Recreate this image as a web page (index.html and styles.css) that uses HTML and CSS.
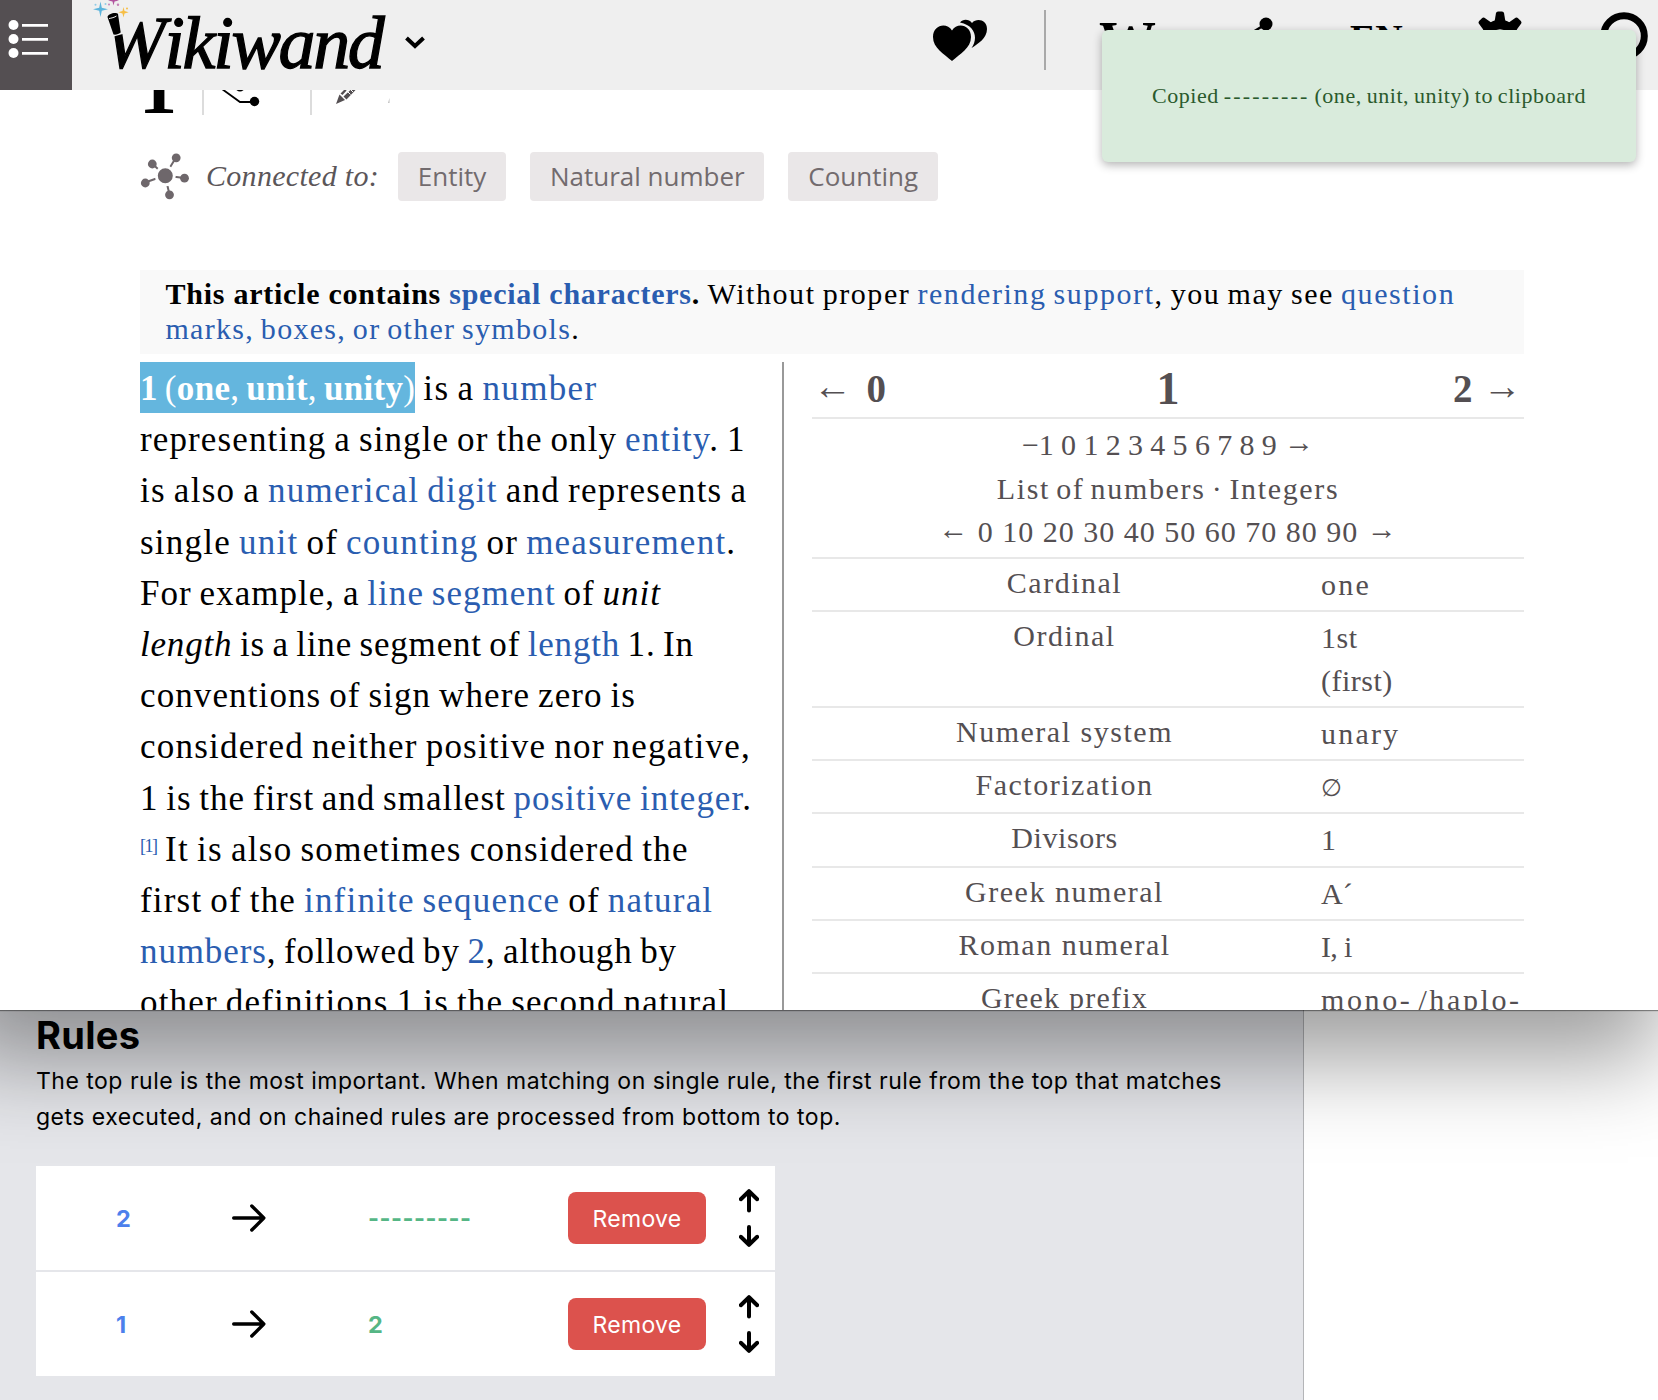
FILE: index.html
```html
<!DOCTYPE html>
<html lang="en">
<head>
<meta charset="utf-8">
<title>1 - Wikiwand</title>
<link rel="stylesheet" href="styles.css">
</head>
<body>
<main class="window">
  <header class="topbar">
    <button class="menu" aria-label="Contents">
      <svg width="72" height="90" viewBox="0 0 72 90"><g fill="#fff"><circle cx="13.5" cy="25" r="5"/><circle cx="13.5" cy="39" r="5"/><circle cx="13.5" cy="53" r="5"/><path d="M22 24h26v2.8H22zM22 38h26v2.8H22zM22 52h26v2.8H22z"/></g></svg>
    </button>
    <div class="logo">
      <span class="logo-text"><span class="cap">W</span>ikiwand</span>
      <svg class="wand" width="50" height="50" viewBox="90 0 50 50">
        <path d="M104 10h25v14h-5.500l1 9.500-11 3-9.500-4z" fill="#efefef"/>
        <path d="M107.500 17c0-3.500 9-5.500 10.500-3l2.700 18.500c-1.500 1.500-5 2.500-7.200 2z"/>
        <path d="M109 18.500c2-.2 6-1.300 7.500-2.500" stroke="#efefef" fill="none"/>
        <path d="M100.500 1.500l1.300 6.200 6.200 1.500-6.200 1.500-1.300 6.300-1.300-6.300-6.200-1.500 6.200-1.500z" fill="#5cb4dc"/>
        <path d="M113.500-5l1 4.500 4.500 1-4.500 1-1 4-1-4-4.500-1 4.500-1z" fill="#b2569f"/>
        <path d="M123.500 7l1 4 4.200 1.200-4.200 1.200-1 4-1-4-4.200-1.200 4.200-1.200z" fill="#f6be45"/>
        <g fill="#8fcbe6"><circle cx="95.500" cy="4.800" r="1"/><circle cx="105.500" cy="4" r="1"/></g>
        <g fill="#c583b8"><circle cx="109" cy="4.500" r="1"/><circle cx="118" cy="4.800" r="1.200"/></g>
        <circle cx="127" cy="8.500" r="1" fill="#f6be45"/>
      </svg>
    </div>
    <svg class="chevron" width="20" height="14" viewBox="0 0 20 14"><path d="M1.500 2l8.500 8 8.500-8" fill="none" stroke="#000" stroke-width="4"/></svg>
    <nav class="tools">
      <svg width="56" height="44" viewBox="932 18 56 44"><path d="M971.500 48c6-8 5.500-22-11.500-25.500 3-4 9-3.500 12 .5 5-5.500 15-3 15 6 0 9-9 15-15.500 19z"/><path d="M952 61c-8-7-19-13-19-24 0-12.500 14-15 19-6.500 5-8.500 19-6 19 6.500 0 11-11 17-19 24z" stroke="#efefef" stroke-width="3.500" paint-order="stroke"/></svg>
      <i class="sep"></i>
      <b class="w">W</b>
      <svg class="share" width="40" height="50" viewBox="1234 15 40 50"><path d="M1266 24l-26 16 26 16" fill="none" stroke="#000" stroke-width="2.500"/><circle cx="1266" cy="24" r="6.500"/><circle cx="1240" cy="40" r="6"/><circle cx="1266" cy="56" r="6.500"/></svg>
      <b class="en">EN</b>
      <svg class="gear" width="56" height="56" viewBox="-28 -28 56 56"><defs><path id="tooth" d="M-5.500-17l1.500-9q.4-1.500 2-1.500h4q1.600 0 2 1.500l1.500 9z"/></defs><circle r="14.500" fill="none" stroke="#000" stroke-width="9.500"/><use href="#tooth"/><use href="#tooth" transform="rotate(45)"/><use href="#tooth" transform="rotate(90)"/><use href="#tooth" transform="rotate(135)"/><use href="#tooth" transform="rotate(180)"/><use href="#tooth" transform="rotate(225)"/><use href="#tooth" transform="rotate(270)"/><use href="#tooth" transform="rotate(315)"/></svg>
      <svg class="search" width="50" height="62" viewBox="1599 10 50 62"><circle cx="1624" cy="36" r="20.300" fill="none" stroke="#000" stroke-width="7"/></svg>
    </nav>
  </header>

  <div class="viewport">
    <div class="title-row">
      <b class="title">1</b>
      <i class="bar bar-a"></i>
      <svg class="share-s" width="40" height="25" viewBox="220 90 40 25"><path d="M222 89l18 13h14" fill="none" stroke="#000" stroke-width="1.800"/><circle cx="240" cy="87" r="4.600"/><circle cx="254.500" cy="101.500" r="4.700"/></svg>
      <i class="bar bar-b"></i>
      <svg class="pencil" width="56" height="25" viewBox="334 90 56 25"><path d="M336 104l3.500-9.500 5.500 5.500z" fill="#544f52"/><path d="M340.500 93.500L345 89h3l-5.500 6zM343.500 96.500l8-7.500h5L346.500 99.500z" fill="#544f52"/><path d="M346.500 90.500l4 4M349 88l4 4" stroke="#fff"/><path d="M388 103l1.500-5v5z" fill="#bbb"/></svg>
    </div>

    <div class="connected">
      <svg width="50" height="50" viewBox="140 151.500 50 50"><g fill="#6e676b" stroke="#6e676b"><path d="M165 175l-13-12M165 175l11-18M165 175l19 2.500M165 175l-20 7M165 175l4.500 19" stroke-width="2"/><circle cx="165.300" cy="175.300" r="9" stroke="#fff" stroke-width="3"/><g stroke="none"><circle cx="152.300" cy="163.500" r="4.400"/><circle cx="176.200" cy="157.300" r="4.400"/><circle cx="184.500" cy="177.700" r="4.400"/><circle cx="145.300" cy="182.500" r="4.400"/><circle cx="169.500" cy="194.300" r="4.400"/></g></g></svg>
      <em>Connected to:</em>
      <a class="tag">Entity</a><a class="tag">Natural number</a><a class="tag">Counting</a>
    </div>

    <div class="notice">
      <span class="line"><b class="n1">This article contains <a>special characters</a>.</b> <span class="n2">Without proper <a>rendering support</a>, you may see <a>question</a></span></span>
      <span class="line n3"><a>marks, boxes, or other symbols</a>.</span>
    </div>

    <div class="columns">
      <p class="article">
        <span class="line l1"><mark><b>1</b> (<b>one</b>, <b>unit</b>, <b>unity</b>)</mark> is a <a>number</a></span>
        <span class="line l2">representing a single or the only <a>entity</a>. 1</span>
        <span class="line l3">is also a <a>numerical digit</a> and represents a</span>
        <span class="line l4">single <a>unit</a> of <a>counting</a> or <a>measurement</a>.</span>
        <span class="line l5">For example, a <a>line segment</a> of <i>unit</i></span>
        <span class="line l6"><i>length</i> is a line segment of <a>length</a> 1. In</span>
        <span class="line l7">conventions of sign where zero is</span>
        <span class="line l8">considered neither positive nor negative,</span>
        <span class="line l9">1 is the first and smallest <a>positive integer</a>.</span>
        <span class="line l10"><sup><a>[1]</a></sup> It is also sometimes considered the</span>
        <span class="line l11">first of the <a>infinite sequence</a> of <a>natural</a></span>
        <span class="line l12"><a>numbers</a>, followed by <a>2</a>, although by</span>
        <span class="line l13">other definitions 1 is the second natural</span>
      </p>
      <div class="infobox">
        <div class="heading"><b class="prev"><span class="arrow">←</span> 0</b><b class="cur">1</b><b class="next">2 <span class="arrow">→</span></b></div>
        <div class="ranges">
          <span class="line r1">−1 0 1 2 3 4 5 6 7 8 9 <span class="arrow">→</span></span>
          <span class="line r2">List of numbers · Integers</span>
          <span class="line r3"><span class="arrow">←</span> 0 10 20 30 40 50 60 70 80 90 <span class="arrow">→</span></span>
        </div>
        <div class="row"><span class="k">Cardinal</span><span class="v">one</span></div>
        <div class="row row-tall"><span class="k">Ordinal</span><span class="v v-ord">1st<br>(first)</span></div>
        <div class="row"><span class="k">Numeral system</span><span class="v">unary</span></div>
        <div class="row"><span class="k">Factorization</span><span class="v v-empty">∅</span></div>
        <div class="row"><span class="k k-tight">Divisors</span><span class="v">1</span></div>
        <div class="row"><span class="k">Greek numeral</span><span class="v v-greek">Α´</span></div>
        <div class="row"><span class="k">Roman numeral</span><span class="v v-roman">I, i</span></div>
        <div class="row"><span class="k k-prefix">Greek prefix</span><span class="v v-prefix">mono- /haplo-</span></div>
      </div>
    </div>
  </div>
  <div class="toast">Copied <span class="dash">---------</span> (one, unit, unity) to clipboard</div>
</main>

<section class="rules">
  <h2>Rules</h2>
  <p>The top rule is the most important. When matching on single rule, the first rule from the top that matches<br>gets executed, and on chained rules are processed from bottom to top.</p>
  <div class="list">
    <div class="rule">
      <b class="from">2</b>
      <svg width="34" height="28" viewBox="0 0 34 28"><path d="M1.700 14h30M19.800 2l12 12-12 12" fill="none" stroke="#000" stroke-width="3.400" stroke-linecap="round" stroke-linejoin="round"/></svg>
      <b class="to dashes">---------</b>
      <button class="remove">Remove</button>
      <svg class="move" width="20" height="58" viewBox="0 0 20 58"><path d="M10 21.500V3M1.800 10.200L10 2.200l8.200 8M10 38v17M1.800 47.800l8.200 8 8.200-8" fill="none" stroke="#000" stroke-width="4" stroke-linecap="round" stroke-linejoin="round"/></svg>
    </div>
    <div class="rule">
      <b class="from">1</b>
      <svg width="34" height="28" viewBox="0 0 34 28"><path d="M1.700 14h30M19.800 2l12 12-12 12" fill="none" stroke="#000" stroke-width="3.400" stroke-linecap="round" stroke-linejoin="round"/></svg>
      <b class="to">2</b>
      <button class="remove">Remove</button>
      <svg class="move" width="20" height="58" viewBox="0 0 20 58"><path d="M10 21.500V3M1.800 10.200L10 2.200l8.200 8M10 38v17M1.800 47.800l8.200 8 8.200-8" fill="none" stroke="#000" stroke-width="4" stroke-linecap="round" stroke-linejoin="round"/></svg>
    </div>
  </div>
</section>
</body>
</html>
```
FILE: styles.css
```css
* { box-sizing: border-box; }
body { margin: 0; height: 1400px; overflow: hidden; background: #fff; font-family: "Liberation Serif", serif; color: #000; }
button { border: 0; padding: 0; }
svg { display: block; flex: none; }
a { color: #2a5db0; }
.line { display: block; white-space: nowrap; }

/* Browser window */
.window { position: relative; z-index: 1; height: 1010px; background: #fff; }
.window::before { content: ""; position: absolute; z-index: -1; inset: 0 0 0 -45px; box-shadow: 0 0 1px 1px rgba(0,0,0,.4), 0 50px 85px rgba(0,0,0,.38); }
.window::after { content: ""; position: absolute; z-index: -1; inset: 0; background: #fff; }

.topbar { display: flex; height: 90px; background: #efefef; }
.menu { width: 72px; background: #544f52; }
.logo { position: relative; width: 333px; padding-left: 32px; }
.logo-text { display: block; margin-top: -2px; font: italic 74px/90px "Liberation Serif", serif; letter-spacing: -2.3px; -webkit-text-stroke: 1.3px #000; white-space: nowrap; }
.cap { letter-spacing: -1.3px; }
.wand { position: absolute; left: 18px; top: 0; }
.chevron { margin-top: 36px; }
.tools { display: flex; align-items: flex-start; margin-left: 507px; }
.tools > svg:first-child { margin-top: 18px; }
.sep { width: 2px; height: 60px; margin: 10px 0 0 56px; background: #a9a9a9; }
.w { margin: 9px 0 0 53px; width: 58px; font-size: 57px; line-height: 66px; }
.share { margin: 15px 0 0 77px; }
.en { margin: 16px 0 0 76px; width: 54px; font-size: 38px; line-height: 44px; }
.gear { margin: 11px 0 0 67.500px; }
.search { margin: 10px 0 0 71.500px; }

.viewport { height: 920px; padding: 0 134px 0 140px; overflow: hidden; }
.title-row { display: flex; height: 25px; overflow: hidden; }
.title { width: 62px; margin: -15px 0 0 -1px; padding-right: 20px; font-size: 76px; line-height: 25px; }
.bar { width: 2px; height: 25px; background: #dcdcdc; }
.bar-a { margin-left: 1px; }
.share-s { margin-left: 16px; }
.bar-b { margin-left: 50px; }
.pencil { margin-left: 22px; }

.connected { display: flex; align-items: center; height: 49px; margin-top: 37px; }
.connected em { width: 191px; padding-left: 16px; margin-top: -1px; font-size: 30px; letter-spacing: .3px; color: #5b5659; white-space: nowrap; }
.tag { height: 49px; border-radius: 4px; padding: 0 19.800px; margin-right: 24px; background: #eae7e8; color: #726b6e; font: 26px/48px "Open Sans", sans-serif; white-space: nowrap; }
.connected em + .tag { margin-left: 17px; }

.notice { height: 84px; margin-top: 69px; padding: 5.500px 25.500px; background: #f9f9f9; font-size: 30px; line-height: 35px; }
.n1 { letter-spacing: .740px; }
.n2 { letter-spacing: 1.570px; word-spacing: -2px; }
.n3 { letter-spacing: 1.290px; word-spacing: -2px; }

.columns { display: flex; margin-top: 8px; }
.article { width: 644px; height: 700px; margin: 0; padding-top: 1px; border-right: 2px solid #999; font-size: 35px; line-height: 51.200px; word-spacing: -2px; }
mark { display: inline-block; height: 51.200px; margin: -1px 0 0; padding: 1px 0 0; background: #64b6de; color: #fff; letter-spacing: .300px; vertical-align: top; }
sup { display: inline-block; width: 17px; font-size: 18px; line-height: 20px; letter-spacing: -1.500px; vertical-align: 9px; }
.l1 { height: 51.200px; letter-spacing: 1.350px; }
.l2 { letter-spacing: 1.125px; }
.l3 { letter-spacing: 1.255px; }
.l4 { letter-spacing: 1.240px; }
.l5 { letter-spacing: 1.040px; }
.l6 { letter-spacing: .805px; }
.l7 { letter-spacing: 1.110px; }
.l8 { letter-spacing: 1.230px; }
.l9 { letter-spacing: .990px; }
.l10 { letter-spacing: 1.280px; }
.l11 { letter-spacing: 1.190px; }
.l12 { letter-spacing: .880px; }
.l13 { letter-spacing: 1.195px; }

.infobox { width: 712px; margin-left: 28px; color: #544f52; font-size: 30px; line-height: 43.200px; }
.infobox > div { border-bottom: 2px solid #e8e8e8; }
.arrow { position: relative; top: -3px; }
.heading { display: flex; justify-content: space-between; height: 57.400px; padding: 0 7px 0 1px; font-size: 39px; line-height: 54px; white-space: nowrap; }
.prev { width: 70px; letter-spacing: 2.400px; }
.next { width: 64px; letter-spacing: .300px; }
.cur { font-size: 46px; }
.ranges { padding: 4px 0; text-align: center; }
.r1 { letter-spacing: -.100px; }
.r2 { letter-spacing: 1.650px; word-spacing: -3px; }
.r3 { letter-spacing: 1px; }
.row { display: flex; padding-bottom: 4px; white-space: nowrap; }
.row-tall { padding-bottom: 3.400px; }
.k { width: 505px; padding-top: 2px; text-align: center; letter-spacing: 1.520px; }
.k-tight { letter-spacing: .620px; }
.k-prefix { letter-spacing: 1.230px; }
.v { padding: 4px 0 0 4px; letter-spacing: 2.200px; }
.v-ord { letter-spacing: .500px; }
.v-empty { padding-top: 6.500px; font-size: 24px; line-height: 40.700px; }
.v-greek { letter-spacing: 0; }
.v-roman { letter-spacing: -.700px; }
.v-prefix { letter-spacing: 2.600px; word-spacing: -4px; }

.toast { position: absolute; left: 1102px; top: 30px; width: 534px; height: 132px; border-radius: 6px; background: #d9ebdc; box-shadow: 0 3px 10px rgba(0,0,0,.3); color: #2a5a2c; font-size: 22px; line-height: 131px; letter-spacing: .560px; word-spacing: -1.200px; text-align: center; white-space: nowrap; }
.dash { letter-spacing: 2.200px; }

/* Rules panel */
.rules { width: 1304px; height: 390px; padding: 2px 36px 0; border-right: 1px solid #b4b5b8; background: #e5e6ea; font-family: Inter, sans-serif; }
.rules h2 { margin: 0; font-size: 38px; line-height: 46px; letter-spacing: .300px; }
.rules p { margin: 4.600px 0 0; font-size: 23px; line-height: 36px; letter-spacing: .490px; white-space: nowrap; }
.list { display: grid; gap: 2px; width: 739px; margin-top: 31.400px; }
.rule { display: grid; grid-template-columns: 116px 136px 200px 138px 1fr; align-items: center; height: 104px; padding-left: 80px; background: #fff; font-size: 23.500px; }
.from { padding-top: 2px; color: #4c80ec; }
.to { padding-top: 2px; color: #55b685; }
.dashes { letter-spacing: .500px; }
.remove { height: 52px; padding-top: 2px; border-radius: 8px; background: #dc524d; color: #fff; font: 23px Inter, sans-serif; letter-spacing: .300px; }
.move { margin-left: 33px; }
```
